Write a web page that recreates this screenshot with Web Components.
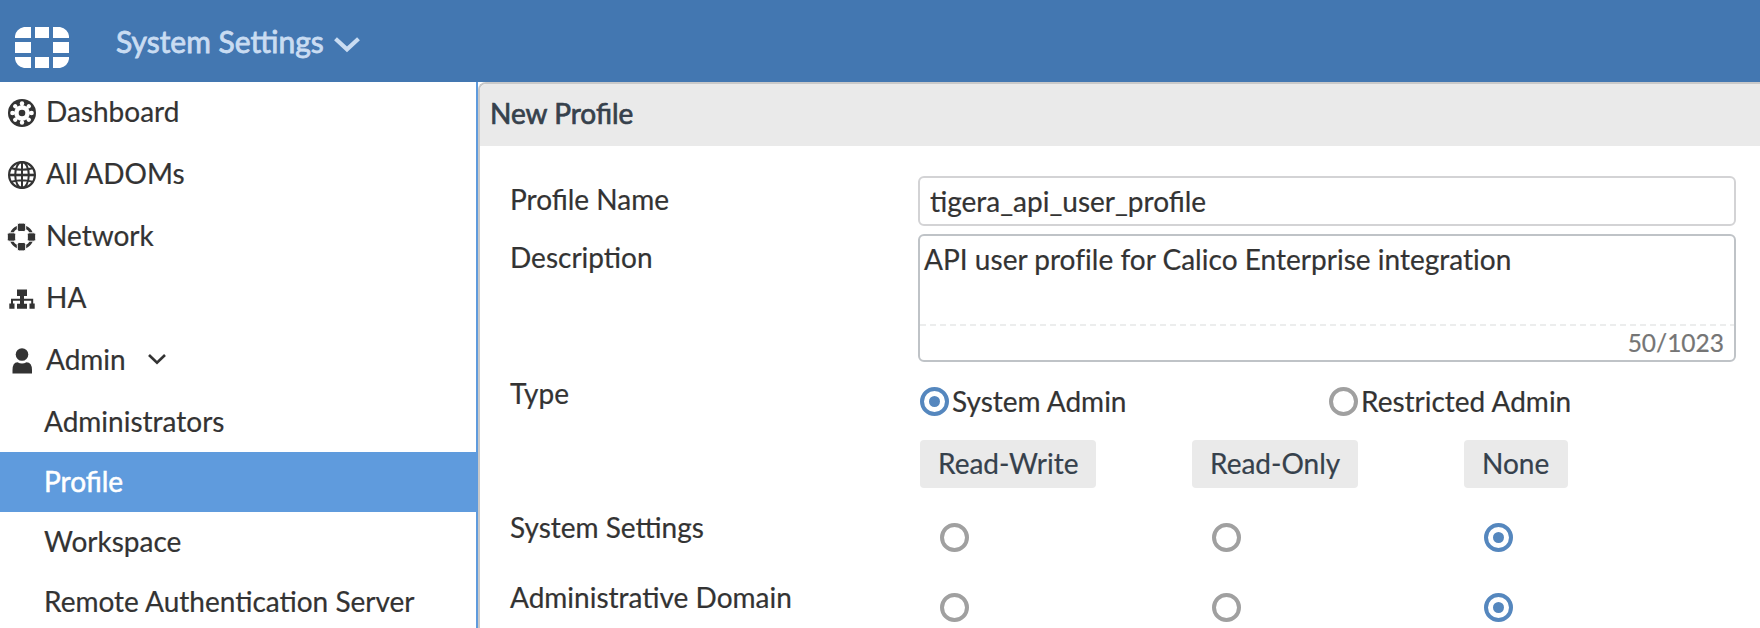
<!DOCTYPE html>
<html lang="en">
<head>
<meta charset="utf-8">
<title>System Settings</title>
<style>
html,body{margin:0;height:100%;background:#fff;overflow:hidden}
body{font-family:Lato,Carlito,sans-serif;font-size:28px;line-height:34px;color:#333;-webkit-text-stroke:.2px}
</style>
</head>
<body>
<settings-app></settings-app>
<script>
const define = (name, html) => customElements.define(name, class extends HTMLElement {
  constructor() {
    super();
    const t = document.createElement('template');
    t.innerHTML = html;
    this.attachShadow({ mode: 'open' }).appendChild(t.content.cloneNode(true));
  }
});

const spokes = Array.from({ length: 8 }, (_, i) => `<g transform="rotate(${i * 45} 14 14)" fill="#fff"><circle cx="14" cy="4.400" r="2.200"/><path d="M12.700 4.400h2.600v5h-2.600z"/></g>`).join('');
const ICONS = {
  dashboard: `<circle cx="14" cy="14" r="14"/><circle cx="14" cy="14" r="7.800" fill="#fff"/>${spokes}<circle cx="14" cy="14" r="3.300"/>`,
  globe: `<g fill="none" stroke="#333" stroke-width="2"><circle cx="14" cy="14" r="12.900" stroke-width="2.200"/><ellipse cx="14" cy="14" rx="6.800" ry="13"/><path d="M14 1v26M3.500 7.200q10.500 3 21 0M3.500 20.800q10.500-3 21 0"/><path d="M1 14h26" stroke-width="2.600"/></g>`,
  network: `<circle cx="13.500" cy="14" r="10.600" fill="none" stroke="#333" stroke-width="2.800"/><g stroke="#fff" stroke-width="1"><rect x="9.300" y=".1" width="8.400" height="8.400" rx="1.800"/><rect x="9.300" y="19.500" width="8.400" height="8.400" rx="1.800"/><rect x="-.7" y="9.800" width="8.400" height="8.400" rx="1.800"/><rect x="19.300" y="9.800" width="8.400" height="8.400" rx="1.800"/></g>`,
  ha: `<path d="M9 4.500h10v6.500H9zM1.300 18.500h5.200v5.200h-5.200zM9 18.700h10v5H9zM21.500 18.500h5.200v5.200h-5.200z"/><path d="M14 10v9M4 19v-4.300h20.200V19" fill="none" stroke="#333" stroke-width="2"/><path d="M12 10h4v9h-4z"/>`,
  user: `<circle cx="14" cy="7.500" r="6.300"/><path d="M4.500 26.500v-3.500q0-7.500 5-7.800q4.500 2.400 9 0q5.500.3 5.500 7.800v3.500z"/>`
};

customElements.define('nav-icon', class extends HTMLElement {
  connectedCallback() {
    this.attachShadow({ mode: 'open' }).innerHTML = `<style>:host{display:block;width:28px;height:28px}svg{display:block;overflow:visible}</style>
    <svg width="28" height="28" viewBox="0 0 28 28" fill="#333">${ICONS[this.getAttribute('name')]}</svg>`;
  }
});

define('brand-logo', `<style>:host{display:block;width:54px;height:41px}svg{display:block}</style>
<svg width="54" height="41" viewBox="0 0 54 41" fill="#fff"><path d="M9 0H16V11H0V9Q1 2 9 0zM20 0H34V11H20zM38 0H45Q53 2 54 9V11H38zM0 15H16V26H0zM38 15H54V26H38zM0 30H16V41H9Q1 39 0 32zM20 30H34V41H20zM38 30H54V32Q53 39 45 41H38z"/></svg>`);

define('top-bar', `<style>
:host{display:flex;height:82px;background:#4377b1;box-sizing:border-box;padding-left:15px}
brand-logo{margin-top:27px}
.title{margin:23px 0 0 47px;font-size:30px;line-height:36px;color:#c9dcf2;-webkit-text-stroke:.8px #c9dcf2}
svg{margin:37px 0 0 10px}
</style><brand-logo></brand-logo><div class="title"><slot></slot></div>
<svg width="26" height="16" viewBox="0 0 26 16" fill="none" stroke="#c9dcf2" stroke-width="4.200"><path d="M1.500 1.800L13 12.300L24.500 1.800"/></svg>`);

define('nav-item', `<style>
:host{display:flex;height:62px;box-sizing:border-box;padding:0 0 4px 8px;align-items:center}
slot[name=icon]{display:block;margin-top:4px}
.label{margin-left:10px}
::slotted(svg){margin-left:21px}
</style><slot name="icon"></slot><div class="label"><slot></slot></div><slot name="end"></slot>`);

define('nav-subitem', `<style>
:host{display:flex;height:60px;box-sizing:border-box;padding:0 0 3px 44px;align-items:center}
:host([active]){background:#5f9bdd;color:#fff;-webkit-text-stroke:.5px #fff}
</style><slot></slot>`);

define('side-nav', `<style>
:host{display:block;width:476px;flex:none;border-right:2px solid #5f9bdd;overflow:hidden}
</style>
<nav-item><nav-icon slot="icon" name="dashboard"></nav-icon>Dashboard</nav-item>
<nav-item><nav-icon slot="icon" name="globe"></nav-icon>All ADOMs</nav-item>
<nav-item><nav-icon slot="icon" name="network"></nav-icon>Network</nav-item>
<nav-item><nav-icon slot="icon" name="ha"></nav-icon>HA</nav-item>
<nav-item><nav-icon slot="icon" name="user"></nav-icon>Admin<svg slot="end" width="20" height="12" viewBox="0 0 20 12" fill="none" stroke="#333" stroke-width="2.600"><path d="M2 2L10 9.800L18 2"/></svg></nav-item>
<nav-subitem>Administrators</nav-subitem>
<nav-subitem active>Profile</nav-subitem>
<nav-subitem>Workspace</nav-subitem>
<nav-subitem>Remote Authentication Server</nav-subitem>`);

define('radio-mark', `<style>
:host{display:flex;width:29px;height:29px;box-sizing:border-box;border:4px solid #a0a0a0;border-radius:50%;align-items:center;justify-content:center;flex:none;background:#fff}
:host([checked]){border-color:#5587be}
:host([checked]) i{width:11px;height:11px;border-radius:50%;background:#5587be}
</style><i></i>`);

define('radio-option', `<style>:host{display:flex;align-items:center;gap:3px}</style>
<slot name="mark"></slot><span><slot></slot></span>`);

define('perm-button', `<style>
:host{display:inline-block;height:48px;line-height:47px;min-width:104px;box-sizing:border-box;padding:0 18px;background:#eaeaea;border-radius:4px;color:#36414c}
</style><slot></slot>`);

define('form-row', `<style>
:host{display:grid;grid-template-columns:408px 818px}
</style><div><slot name="label"></slot></div><div><slot></slot></div>`);

define('text-field', `<style>
:host{display:block;height:50px;box-sizing:border-box;border:2px solid #d3d3d5;border-radius:6px;padding:6px 10px}
</style><slot></slot>`);

define('text-area', `<style>
:host{display:flex;flex-direction:column;height:128px;box-sizing:border-box;border:2px solid #bfc3c7;border-radius:6px}
.text{height:88px;box-sizing:border-box;padding:6px 4px;letter-spacing:.02px;font-variant-ligatures:common-ligatures}
.line{height:2px;background:repeating-linear-gradient(90deg,#eceded 0 6px,transparent 6px 10px)}
.count{text-align:right;padding-right:10px;font-size:24.500px;line-height:33px;color:#757575}
</style><div class="text"><slot></slot></div><div class="line"></div><div class="count"><slot name="count"></slot></div>`);

define('profile-panel', `<style>
:host{display:block;flex:1;box-sizing:border-box;border:solid #c9c9c9;border-width:2px 0 0 2px;border-top-left-radius:8px;overflow:hidden}
h1{margin:0;height:62px;box-sizing:border-box;padding:12px 0 0 10px;font:inherit;background:#eaeaea;color:#36414c;-webkit-text-stroke:.7px #36414c}
.form{padding:30px 0 0 30px}
form-row{height:70px}
.name{height:58px}.desc{height:142px}.type{height:64px}
.name span,.desc span{display:block;padding-top:6px}
.cols{display:grid;grid-template-columns:272px 272px 272px;padding-left:2px}
.two{grid-template-columns:409px 400px;padding-top:8px}
.marks{padding:13px 0 0 22px}
</style>
<h1>New Profile</h1>
<div class="form">
<form-row class="name"><span slot="label">Profile Name</span><text-field>tigera_api_user_profile</text-field></form-row>
<form-row class="desc"><span slot="label">Description</span><text-area>API user profile for Calico Enterprise integration<span slot="count" style="padding:0">50/1023</span></text-area></form-row>
<form-row class="type"><span slot="label">Type</span><div class="cols two"><radio-option><radio-mark slot="mark" checked></radio-mark>System Admin</radio-option><radio-option><radio-mark slot="mark"></radio-mark>Restricted Admin</radio-option></div></form-row>
<form-row><div class="cols"><div><perm-button>Read-Write</perm-button></div><div><perm-button>Read-Only</perm-button></div><div><perm-button>None</perm-button></div></div></form-row>
<form-row><span slot="label">System Settings</span><div class="cols marks"><radio-mark></radio-mark><radio-mark></radio-mark><radio-mark checked></radio-mark></div></form-row>
<form-row><span slot="label">Administrative Domain</span><div class="cols marks"><radio-mark></radio-mark><radio-mark></radio-mark><radio-mark checked></radio-mark></div></form-row>
</div>`);

define('settings-app', `<style>
:host{display:flex;flex-direction:column;height:628px;overflow:hidden}
.main{display:flex;flex:1;min-height:0}
</style><top-bar>System Settings</top-bar><div class="main"><side-nav></side-nav><profile-panel></profile-panel></div>`);
</script>
</body>
</html>
